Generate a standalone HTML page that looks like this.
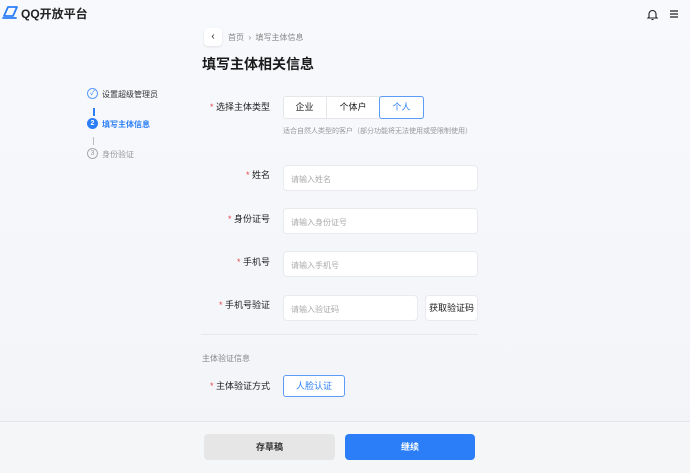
<!DOCTYPE html>
<html><head><meta charset="utf-8"><style>
*{margin:0;padding:0;box-sizing:border-box}
body{width:690px;height:473px;overflow:hidden;position:relative;background:linear-gradient(180deg,#f7f9fc,#f2f4f8);font-family:"Liberation Sans","Noto Sans CJK SC",sans-serif;color:#1a1a1a}
.a{position:absolute}
.lbl{position:absolute;right:420px;font-size:9px;color:#222;white-space:nowrap}
.lbl:before{content:"* ";color:#e5484d}
.inp{position:absolute;left:283px;width:195px;height:26px;background:#fff;border:1px solid #e8eaee;border-radius:4px;font-size:8px;color:#aaa;padding:8px 7px}
</style></head><body>
<div class="a" style="left:2px;top:6px;width:18px;height:14px">
<svg width="20" height="14" viewBox="0 0 20 14"><path d="M6 1h9l-4 9H2z" fill="none" stroke="#2b7ef7" stroke-width="1.8" stroke-linejoin="round"/><path d="M1 12h13" stroke="#2b7ef7" stroke-width="1.8" stroke-linecap="round"/></svg></div>
<div class="a" style="left:21px;top:5px;font-size:12px;font-weight:bold;color:#222">QQ开放平台</div>
<svg class="a" style="left:646px;top:8px" width="13" height="13" viewBox="0 0 13 13"><path d="M3 9V6a3.5 3.5 0 017 0v3l1 1H2z" fill="none" stroke="#222" stroke-width="1.1"/><path d="M5.5 11.5h2" stroke="#222" stroke-width="1.1"/></svg>
<svg class="a" style="left:669px;top:9px" width="10" height="10" viewBox="0 0 10 10"><path d="M1 2h8M1 5h8M1 8h8" stroke="#222" stroke-width="1.2"/></svg>
<div class="a" style="left:204px;top:28px;width:18px;height:18px;background:#fff;border-radius:4px;box-shadow:0 1px 2px rgba(0,0,0,.1);font-size:10px;text-align:center;line-height:18px">‹</div>
<div class="a" style="left:228px;top:32px;font-size:8px;color:#888">首页 &nbsp;›&nbsp; 填写主体信息</div>
<div class="a" style="left:202px;top:54px;font-size:14px;font-weight:bold">填写主体相关信息</div>
<div class="a" style="left:87px;top:88px;width:11px;height:11px;border:1px solid #5a9cf8;border-radius:50%;font-size:7px;color:#2b7ef7;text-align:center;line-height:9px">✓</div>
<div class="a" style="left:102px;top:89px;font-size:8px;color:#333">设置超级管理员</div>
<div class="a" style="left:93px;top:108px;width:1.5px;height:8px;background:#2b7ef7"></div>
<div class="a" style="left:87px;top:118px;width:11px;height:11px;background:#2b7ef7;border-radius:50%;font-size:7px;color:#fff;text-align:center;line-height:11px;font-weight:bold">2</div>
<div class="a" style="left:102px;top:119px;font-size:8px;color:#2b7ef7;font-weight:bold">填写主体信息</div>
<div class="a" style="left:93px;top:137px;width:1px;height:8px;background:#bbb"></div>
<div class="a" style="left:87px;top:148px;width:11px;height:11px;border:1px solid #aaa;border-radius:50%;font-size:7px;color:#999;text-align:center;line-height:9px">3</div>
<div class="a" style="left:102px;top:149px;font-size:8px;color:#999">身份验证</div>

<div class="lbl" style="top:100px">选择主体类型</div>
<div class="a" style="left:283px;top:96px;width:141px;height:23px;background:#fff;border:1px solid #e4e6ea;border-radius:3px;font-size:9px"></div>
<div class="a" style="left:283px;top:96px;width:44px;height:23px;text-align:center;line-height:23px;font-size:9px;border-right:1px solid #e4e6ea">企业</div>
<div class="a" style="left:327px;top:96px;width:52px;height:23px;text-align:center;line-height:23px;font-size:9px">个体户</div>
<div class="a" style="left:379px;top:96px;width:45px;height:23px;text-align:center;line-height:21px;font-size:9px;border:1px solid #5a9cf8;border-radius:3px;color:#2b7ef7">个人</div>
<div class="a" style="left:283px;top:126px;font-size:7px;color:#999">适合自然人类型的客户（部分功能将无法使用或受限制使用）</div>

<div class="lbl" style="top:168px">姓名</div>
<div class="inp" style="top:165px">请输入姓名</div>
<div class="lbl" style="top:212px">身份证号</div>
<div class="inp" style="top:208px">请输入身份证号</div>
<div class="lbl" style="top:255px">手机号</div>
<div class="inp" style="top:251px">请输入手机号</div>
<div class="lbl" style="top:298px">手机号验证</div>
<div class="inp" style="top:295px;width:135px">请输入验证码</div>
<div class="a" style="left:425px;top:295px;width:53px;height:26px;background:#fff;border:1px solid #e8eaee;border-radius:4px;font-size:9px;text-align:center;line-height:24px">获取验证码</div>
<div class="a" style="left:201px;top:334px;width:277px;height:1px;background:#e6e8ec"></div>
<div class="a" style="left:202px;top:353px;font-size:8px;color:#888">主体验证信息</div>
<div class="lbl" style="top:379px">主体验证方式</div>
<div class="a" style="left:283px;top:375px;width:62px;height:22px;background:#fff;border:1px solid #5a9cf8;border-radius:3px;font-size:9px;color:#2b7ef7;text-align:center;line-height:20px">人脸认证</div>

<div class="a" style="left:0;top:421px;width:690px;height:52px;background:#f5f6f8;border-top:1px solid #e4e6ea"></div>
<div class="a" style="left:204px;top:434px;width:131px;height:26px;background:#e6e6e6;border-radius:4px;font-size:9px;font-weight:bold;text-align:center;line-height:26px;color:#333">存草稿</div>
<div class="a" style="left:345px;top:434px;width:130px;height:26px;background:#2b7ef7;border-radius:4px;font-size:9px;font-weight:bold;text-align:center;line-height:26px;color:#fff">继续</div>
</body></html>
